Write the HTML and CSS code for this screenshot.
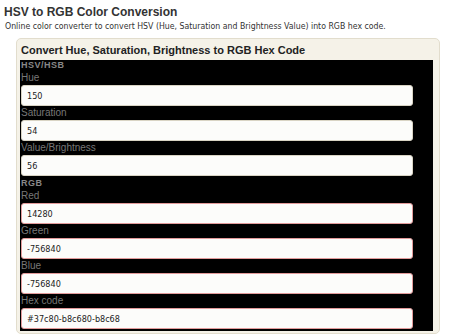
FILE: index.html
```html
<!DOCTYPE html>
<html>
<head>
    <title>HSV to RGB Color Conversion</title>
    <link rel="stylesheet" href="styles.css">
</head>
<body>
    <h1 class="page-title">HSV to RGB Color Conversion</h1>
    <p class="intro">Online color converter to convert HSV (Hue, Saturation and Brightness Value) into RGB hex code.</p>

    <div class="converter">
        <h2>Convert Hue, Saturation, Brightness to RGB Hex Code</h2>
        <form class="panel">
            <div class="group-title">HSV/HSB</div>
            <label for="hue">Hue</label>
            <input type="text" id="hue" value="150">
            <label for="sat">Saturation</label>
            <input type="text" id="sat" value="54">
            <label for="val">Value/Brightness</label>
            <input type="text" id="val" value="56">

            <div class="group-title rgb">RGB</div>
            <label for="red">Red</label>
            <input type="text" id="red" class="bad" value="14280">
            <label for="green">Green</label>
            <input type="text" id="green" class="bad" value="-756840">
            <label for="blue">Blue</label>
            <input type="text" id="blue" class="bad" value="-756840">
            <label for="hex">Hex code</label>
            <input type="text" id="hex" class="bad" value="#37c80-b8c680-b8c68">
        </form>
    </div>
</body>
</html>
```

FILE: styles.css
```css
body {
    background-color: #fff;
    font-family: "Liberation Sans", Arial, sans-serif;
    margin: 0;
    padding: 0;
}

.page-title {
    font-size: 12px;
    color: #333;
    margin: 0;
    padding: 5px 4px 0;
    line-height: 14px;
}

.intro {
    font-family: "DejaVu Sans Condensed", "DejaVu Sans", sans-serif;
    font-size: 8.7px;
    color: #333;
    margin: 1px 0 0 5px;
    line-height: 12px;
}

.converter {
    background-color: #f5f2e8;
    border: 1px solid #e2ddcd;
    border-radius: 5px;
    margin: 6px 10px 0 16px;
    padding: 2px 6px 2px 3px;
}

.converter h2 {
    font-size: 11px;
    color: #222;
    margin: 0;
    padding: 0 1px;
    line-height: 18px;
}

.panel {
    background-color: #000;
    margin: 1px 0 0;
    padding: 0 0 2px;
}

.group-title {
    font-weight: bold;
    font-size: 9px;
    letter-spacing: 0.5px;
    color: #888;
    line-height: 11px;
    padding-left: 1px;
}

.group-title.rgb {
    margin-top: 2px;
}

label {
    display: block;
    font-size: 10px;
    color: #777;
    line-height: 14px;
    padding-left: 1px;
}

input[type="text"] {
    display: block;
    box-sizing: border-box;
    width: 392px;
    height: 21px;
    margin: 0 0 0 1px;
    padding: 0 5px;
    border: 1px solid #d9d4c4;
    border-radius: 3px;
    background-color: #fcfcfa;
    font-family: "DejaVu Sans Condensed", "DejaVu Sans", sans-serif;
    font-size: 9px;
    color: #222;
}

input.bad {
    border-color: #e29a9a;
}
```
